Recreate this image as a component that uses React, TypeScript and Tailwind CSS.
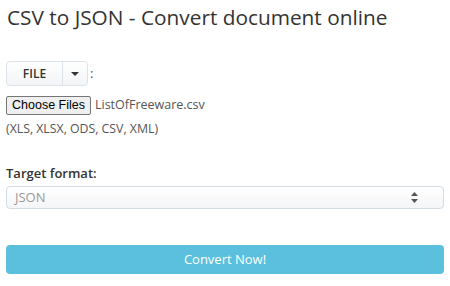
const App = () => {
  return (
    <div className="w-[450px] h-[286px] bg-white px-[6px] font-['Open_Sans',sans-serif] text-[#333]">
      <h1 className="pt-[3px] pl-px text-[20.8px] leading-[28px] text-[#333]">
        CSV to JSON - Convert document online
      </h1>

      <div className="mt-[30px] flex items-center">
        <div className="flex h-[25px] rounded-[4px] border border-[#dde3ea] bg-gradient-to-b from-white to-[#f2f4f6]">
          <button className="w-[56px] border-r border-[#dde3ea] text-[12px] font-semibold text-[#333]">
            FILE
          </button>
          <button className="flex w-[24px] items-center justify-center">
            <span className="block h-0 w-0 border-x-[4px] border-t-[4px] border-x-transparent border-t-[#333]" />
          </button>
        </div>
        <span className="ml-[2px] text-[13px] text-[#555]">:</span>
      </div>

      <div className="mt-[10px] flex items-center">
        <button className="h-[19px] rounded-[2px] border border-[#767676] bg-[#efefef] px-[5px] font-['Liberation_Sans',sans-serif] text-[12.5px] leading-[17px] text-black">
          Choose Files
        </button>
        <span className="ml-[4px] text-[12.5px] text-[#555]">ListOfFreeware.csv</span>
      </div>

      <p className="mt-[5px] text-[12.3px] leading-[18px] text-[#555]">(XLS, XLSX, ODS, CSV, XML)</p>

      <label className="mt-[26px] block text-[13px] font-semibold leading-[18px] text-[#333]">
        Target format:
      </label>

      <div className="mt-[4px] flex h-[23px] items-center justify-between rounded-[4px] border border-[#d4dde6] bg-gradient-to-b from-white to-[#f4f5f6] pl-[8px] pr-[25px]">
        <span className="text-[13px] text-[#999]">JSON</span>
        <svg width="7" height="11" viewBox="0 0 7 11">
          <path d="M3.5 0 L7 4 H0 Z" fill="#555" />
          <path d="M0 7 H7 L3.5 11 Z" fill="#555" />
        </svg>
      </div>

      <button className="mt-[36px] flex h-[29px] w-full items-center justify-center rounded-[4px] bg-[#5bc0de] text-[13px] text-white">
        Convert Now!
      </button>
    </div>
  );
};

export default App;
